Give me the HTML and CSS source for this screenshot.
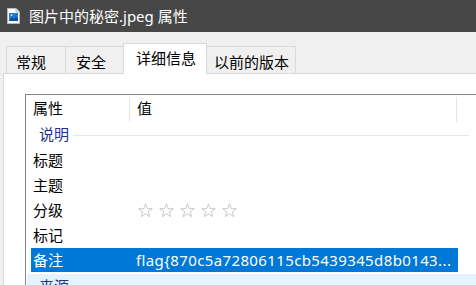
FILE: index.html
```html
<!DOCTYPE html>
<html lang="zh-CN">
<head>
    <meta charset="UTF-8">
    <meta name="viewport" content="width=device-width, initial-scale=1.0">
    <title>图片中的秘密.jpeg 属性</title>
    <link rel="stylesheet" href="styles.css">
</head>
<body>
    <div class="titlebar">
        <svg class="file-icon" width="13" height="16" viewBox="0 0 13 16">
            <path d="M0.5 0.5 H9 L12.5 4 V15.5 H0.5 Z" fill="#fff" stroke="#b9b9b9"/>
            <path d="M9 0.5 V4 H12.5" fill="#e8e8e8" stroke="#b9b9b9"/>
            <rect x="2" y="5" width="9" height="8" fill="#1f7ad6"/>
            <path d="M2 13 L5 9 L7 11 L9 8.5 L11 11 V13 Z" fill="#0b4f9c"/>
            <circle cx="4.5" cy="7" r="1" fill="#bfe2ff"/>
        </svg>
        <span class="title">图片中的秘密.jpeg 属性</span>
    </div>

    <div class="dialog">
        <div class="tabs">
            <div class="tab tab-general">常规</div>
            <div class="tab tab-security">安全</div>
            <div class="tab tab-details active">详细信息</div>
            <div class="tab tab-versions">以前的版本</div>
        </div>

        <div class="panel">
            <div class="listbox">
                <div class="list-header">
                    <div class="col-name">属性</div>
                    <div class="col-value">值</div>
                    <div class="col-end"></div>
                </div>

                <div class="group">
                    <span class="group-title">说明</span>
                    <span class="group-line"></span>
                </div>

                <div class="row"><div class="col-name">标题</div><div class="col-value"></div></div>
                <div class="row"><div class="col-name">主题</div><div class="col-value"></div></div>
                <div class="row">
                    <div class="col-name">分级</div>
                    <div class="col-value stars">
                        <svg width="15" height="15" viewBox="0 0 16 16"><path class="star" d="M8 1 L9.9 6 L15.2 6.1 L11 9.4 L12.5 14.6 L8 11.5 L3.5 14.6 L5 9.4 L0.8 6.1 L6.1 6 Z"/></svg>
                        <svg width="15" height="15" viewBox="0 0 16 16"><path class="star" d="M8 1 L9.9 6 L15.2 6.1 L11 9.4 L12.5 14.6 L8 11.5 L3.5 14.6 L5 9.4 L0.8 6.1 L6.1 6 Z"/></svg>
                        <svg width="15" height="15" viewBox="0 0 16 16"><path class="star" d="M8 1 L9.9 6 L15.2 6.1 L11 9.4 L12.5 14.6 L8 11.5 L3.5 14.6 L5 9.4 L0.8 6.1 L6.1 6 Z"/></svg>
                        <svg width="15" height="15" viewBox="0 0 16 16"><path class="star" d="M8 1 L9.9 6 L15.2 6.1 L11 9.4 L12.5 14.6 L8 11.5 L3.5 14.6 L5 9.4 L0.8 6.1 L6.1 6 Z"/></svg>
                        <svg width="15" height="15" viewBox="0 0 16 16"><path class="star" d="M8 1 L9.9 6 L15.2 6.1 L11 9.4 L12.5 14.6 L8 11.5 L3.5 14.6 L5 9.4 L0.8 6.1 L6.1 6 Z"/></svg>
                    </div>
                </div>
                <div class="row"><div class="col-name">标记</div><div class="col-value"></div></div>
                <div class="row selected">
                    <div class="col-name">备注</div>
                    <div class="col-value flag">flag{870c5a72806115cb5439345d8b0143...</div>
                </div>

                <div class="group hover">
                    <span class="group-title">来源</span>
                    <span class="group-line"></span>
                </div>
            </div>
        </div>
    </div>
</body>
</html>
```

FILE: styles.css
```css
* {
    box-sizing: border-box;
}
html, body {
    margin: 0;
    padding: 0;
    overflow: hidden;
}
body {
    width: 476px;
    height: 285px;
    background: #f0f0f0;
    font-family: "Noto Sans", "Noto Sans CJK SC", sans-serif;
    font-size: 15px;
    color: #000;
}
.titlebar {
    height: 32px;
    background: #474747;
    display: flex;
    align-items: center;
    padding-left: 7px;
}
.file-icon {
    flex: none;
    margin-top: -1px;
}
.title {
    color: #fff;
    margin-left: 9px;
    line-height: 20px;
    margin-top: -1px;
}
.dialog {
    padding-top: 11px;
}
.tabs {
    display: flex;
    align-items: flex-end;
    height: 30px;
    padding-left: 6px;
    position: relative;
    z-index: 1;
}
.tab {
    height: 27px;
    border: 1px solid #d9d9d9;
    border-bottom: none;
    margin-left: -1px;
    line-height: 30px;
    white-space: nowrap;
}
.tab-general {
    width: 60px;
    padding-left: 9px;
    margin-left: 0;
}
.tab-security {
    width: 59px;
    padding-left: 10px;
}
.tab-details {
    width: 84px;
    padding-left: 12px;
}
.tab-versions {
    width: 90px;
    padding-left: 7px;
}
.tab.active {
    height: 31px;
    margin-bottom: -1px;
    background: #fff;
    line-height: 28px;
}
.panel {
    margin-left: 3px;
    background: #fff;
    border-top: 1px solid #d9d9d9;
    border-left: 1px solid #d9d9d9;
    padding: 20px 0 0 21px;
    height: 220px;
}
.listbox {
    border-top: 1px solid #80868c;
    border-left: 1px solid #80868c;
    height: 200px;
}
.list-header {
    display: flex;
    height: 27px;
    align-items: center;
}
.list-header .col-name {
    width: 104px;
    padding-left: 7px;
    height: 25px;
    margin-top: 2px;
    line-height: 22px;
    border-right: 1px solid #e5e5e5;
}
.list-header .col-value {
    width: 327px;
    padding-left: 7px;
    height: 25px;
    margin-top: 2px;
    line-height: 22px;
    border-right: 1px solid #e5e5e5;
}
.group {
    display: flex;
    align-items: center;
    height: 25px;
    padding-left: 13px;
    margin-bottom: 1px;
}
.group-title {
    color: #1e3287;
    line-height: 25px;
}
.group-line {
    flex: none;
    width: 396px;
    height: 1px;
    margin-left: 4px;
    margin-top: 1px;
    background: #e2e6f0;
}
.group.hover {
    margin-top: 2px;
    margin-left: 1px;
    padding-left: 12px;
    background: #e5f3ff;
}
.row {
    display: flex;
    align-items: center;
    height: 24px;
    margin: 0 0 1px 5px;
    width: 427px;
    line-height: 24px;
}
.row .col-name {
    width: 105px;
    padding-left: 2px;
}
.row .col-value {
    flex: 1;
    white-space: nowrap;
    overflow: hidden;
}
.row .flag {
    letter-spacing: 0.38px;
}
.row.selected {
    background: #0078d7;
    color: #fff;
}
.stars {
    display: flex;
    gap: 6px;
    padding-left: 2px;
}
.stars svg {
    display: block;
}
.star {
    fill: none;
    stroke: #c4c4c4;
    stroke-width: 1;
    stroke-linejoin: miter;
}
```
